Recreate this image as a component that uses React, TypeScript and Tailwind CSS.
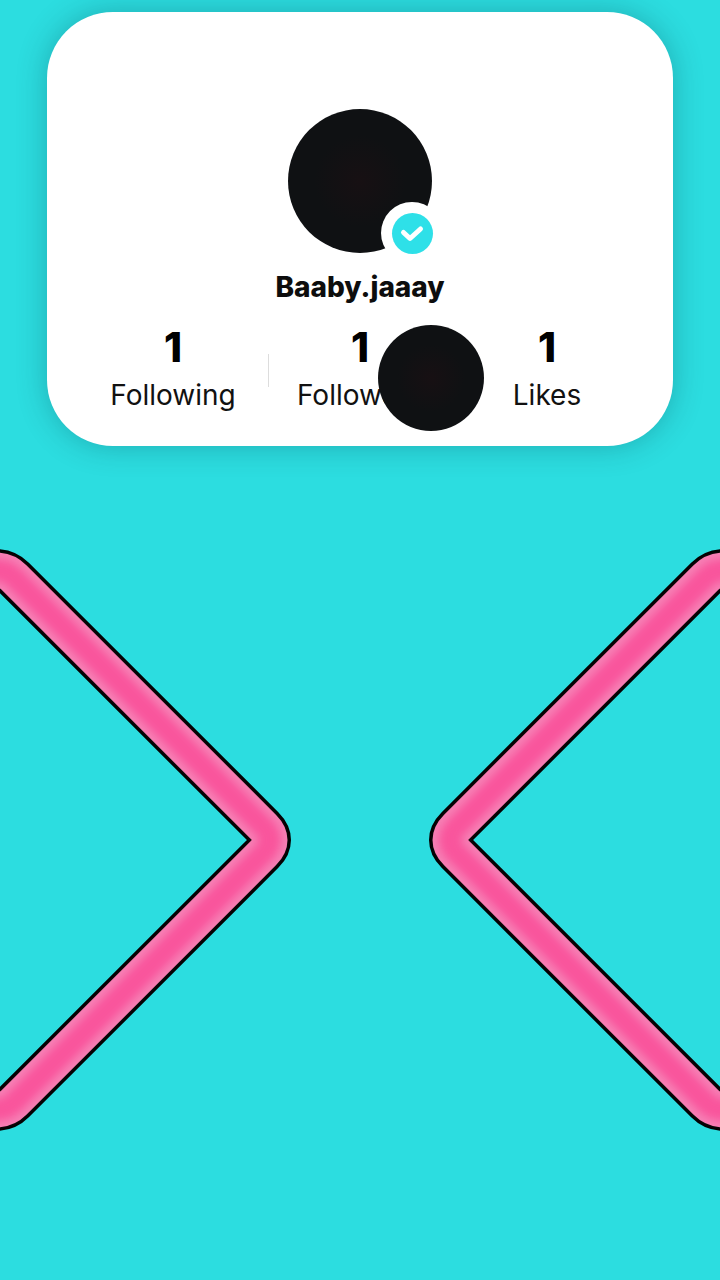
const CHEVRON = "M-30 570 L-4 570 Q6.5 570 14 577.5 L263.5 827 Q276.5 840 263.5 853 L14 1102.5 Q6.5 1110 -4 1110 L-30 1110";

const STATS = [
  { value: "1", label: "Following" },
  { value: "1", label: "Followers" },
  { value: "1", label: "Likes" },
];

function Stat({ value, label }: { value: string; label: string }) {
  return (
    <div className="flex w-[186px] flex-col items-center">
      <span className="text-[41px] leading-[44px] font-extrabold text-black">{value}</span>
      <span className="mt-[9px] text-[28px] leading-[34px] text-[#111]">{label}</span>
    </div>
  );
}

function Chevron({ flip }: { flip?: boolean }) {
  return (
    <g transform={flip ? "translate(720 0) scale(-1 1)" : undefined} fill="none" strokeLinejoin="round">
      <path d={CHEVRON} stroke="#000" strokeWidth={42} />
      <path d={CHEVRON} stroke="#f680b5" strokeWidth={35} />
      <path d={CHEVRON} stroke="#f9549c" strokeWidth={22} filter="url(#soft)" />
    </g>
  );
}

export default function App() {
  return (
    <div className="flex h-[1280px] w-[720px] flex-col items-center overflow-hidden bg-[#2cdde0] pt-3 font-['Inter',sans-serif]">
      <div className="relative flex h-[434px] w-[626px] shrink-0 flex-col items-center rounded-[66px] bg-white pt-[97px] shadow-[0_0_30px_rgba(0,60,70,0.3)]">
        <div className="relative">
          <div className="h-36 w-36 rounded-full bg-[radial-gradient(circle,#171013_0%,#0f1113_45%)]" />
          <div className="absolute top-[93px] left-[93px] flex h-[62px] w-[62px] items-center justify-center rounded-full bg-white">
            <div className="flex h-[41px] w-[41px] items-center justify-center rounded-full bg-[#2ee0e8]">
              <svg width="26" height="20" viewBox="0 0 26 20" fill="none">
                <path d="M4.5 9.5 L11 15.5 L21.5 6" stroke="#fff" strokeWidth={5} strokeLinecap="round" strokeLinejoin="round" />
              </svg>
            </div>
          </div>
        </div>
        <div className="mt-[16px] text-[28px] leading-9 font-extrabold text-[#0d0d0d]">Baaby.jaaay</div>
        <div className="mt-[20px] flex items-center">
          <Stat {...STATS[0]} />
          <div className="mt-1 -mr-[2px] ml-[2px] h-[33px] w-px bg-[#ddd]" />
          <Stat {...STATS[1]} />
          <div className="mt-1 h-[33px] w-px bg-[#ddd]" />
          <Stat {...STATS[2]} />
        </div>
        <div className="absolute top-[313px] left-[331px] h-[106px] w-[106px] rounded-full bg-[radial-gradient(circle,#171013_0%,#0f1113_45%)]" />
      </div>
      <svg className="mt-[94px] shrink-0" width="720" height="600" viewBox="0 540 720 600">
        <defs>
          <filter id="soft" x="-10%" y="-10%" width="120%" height="120%">
            <feGaussianBlur stdDeviation="4" />
          </filter>
        </defs>
        <Chevron />
        <Chevron flip />
      </svg>
    </div>
  );
}
